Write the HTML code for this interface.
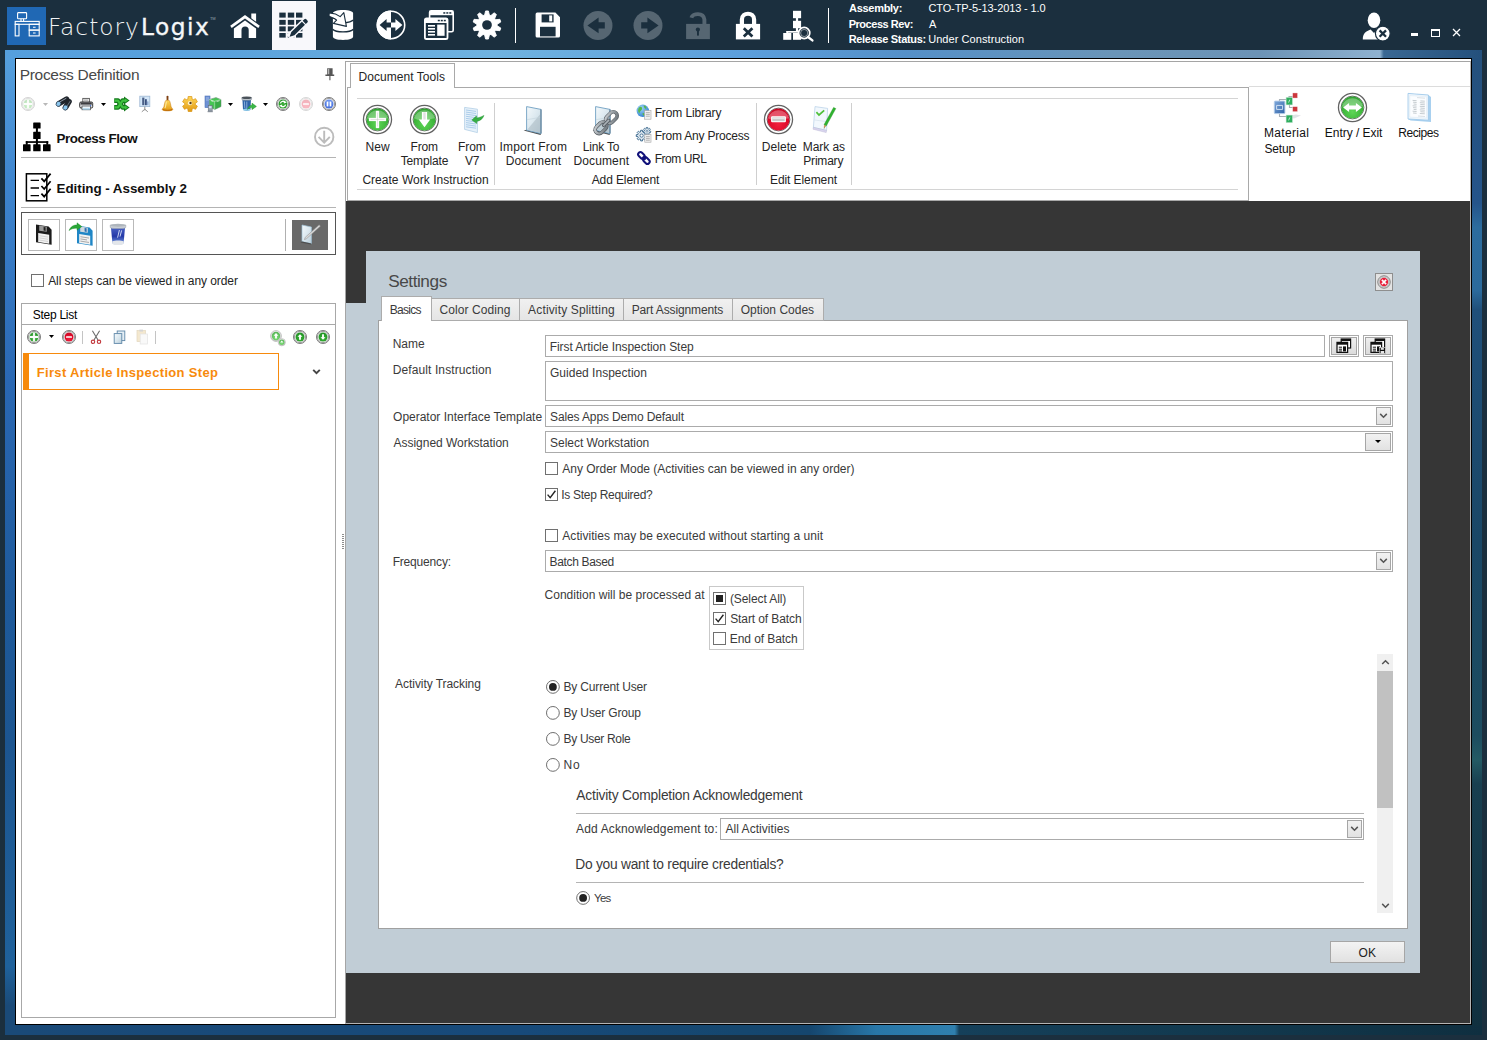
<!DOCTYPE html>
<html><head><meta charset="utf-8"><title>FactoryLogix</title>
<style>
html,body{margin:0;padding:0;}
body{width:1487px;height:1040px;overflow:hidden;background:#1b2f3e;font-family:"Liberation Sans",sans-serif;font-size:12px;color:#222;position:relative;}
#root{position:absolute;left:0;top:0;width:1487px;height:1040px;overflow:hidden;}
#root div,#root svg,#root span.t{position:absolute;box-sizing:border-box;}
span.t{white-space:pre;}
svg{overflow:visible;}
</style></head><body><div id="root">
<svg width="0" height="0" style="left:0;top:0"><defs>
<radialGradient id="gGreen" cx="50%" cy="70%" r="75%"><stop offset="0" stop-color="#5fd657"/><stop offset="0.6" stop-color="#3db53a"/><stop offset="1" stop-color="#2d9a2f"/></radialGradient>
<radialGradient id="gGreenS" cx="50%" cy="65%" r="70%"><stop offset="0" stop-color="#38b236"/><stop offset="1" stop-color="#1f8e22"/></radialGradient>
<radialGradient id="gRed" cx="50%" cy="70%" r="75%"><stop offset="0" stop-color="#f0203c"/><stop offset="0.6" stop-color="#de0a2a"/><stop offset="1" stop-color="#c00822"/></radialGradient>
<radialGradient id="gBlue" cx="50%" cy="30%" r="75%"><stop offset="0" stop-color="#7aa2f5"/><stop offset="1" stop-color="#3c66d8"/></radialGradient>
<linearGradient id="gRing" x1="0" y1="0" x2="0" y2="1"><stop offset="0" stop-color="#6e6e6e"/><stop offset="0.5" stop-color="#9a9a9a"/><stop offset="1" stop-color="#d8d8d8"/></linearGradient>
<linearGradient id="gRing2" x1="0" y1="0" x2="0" y2="1"><stop offset="0" stop-color="#f4f4f4"/><stop offset="1" stop-color="#bdbdbd"/></linearGradient>
<linearGradient id="gDoc" x1="0" y1="0" x2="1" y2="1"><stop offset="0" stop-color="#f4f9fc"/><stop offset="0.5" stop-color="#dbe8ef"/><stop offset="1" stop-color="#b9cdd8"/></linearGradient>
<linearGradient id="gBtn" x1="0" y1="0" x2="0" y2="1"><stop offset="0" stop-color="#f1f1f1"/><stop offset="1" stop-color="#dedede"/></linearGradient>
<linearGradient id="gChain" x1="0" y1="0" x2="1" y2="1"><stop offset="0" stop-color="#c9ced2"/><stop offset="1" stop-color="#6d757b"/></linearGradient>
<linearGradient id="gGold" x1="0" y1="0" x2="0" y2="1"><stop offset="0" stop-color="#ffd75a"/><stop offset="1" stop-color="#e29a12"/></linearGradient>
</defs></svg>

<div style="left:0px;top:0px;width:1487px;height:1040px;background:#1b2f3e;"></div>
<div style="left:5px;top:50px;width:1477px;height:985px;background:#1d5a94;"></div>
<div style="left:5px;top:50px;width:1477px;height:9px;background:linear-gradient(90deg,#559fdd 0%,#5aa2dc 15%,#70b3e0 33%,#5c9fdc 50%,#5590c8 61%,#6a95b8 75%,#6c93b6 85%,#8fb2d0 93.1%,#3a6893 93.35%,#24507c 100%);"></div>
<div style="left:5px;top:58px;width:11px;height:977px;background:linear-gradient(180deg,#559fdd 0%,#3f86cf 12%,#2a68b3 33%,#1e5a9c 55%,#1c5590 70%,#1f619b 93%,#1a4a78 97%,#1a4a78 100%);"></div>
<div style="left:5px;top:1025px;width:1477px;height:10px;background:linear-gradient(90deg,#1a4a78 0%,#174a7a 35%,#15476f 50%,#15466e 54.5%,#2877a8 59%,#2f7fae 64.3%,#15405a 64.6%,#123a50 80%,#0f2f40 100%);"></div>
<div style="left:1472px;top:58px;width:10px;height:968px;background:linear-gradient(180deg,#24507c 0%,#25548a 15%,#2c6c9e 17.5%,#2b6a9c 24%,#1f4f7a 26%,#1a4766 50%,#1c4c5f 70%,#235a64 72.5%,#183f50 75%,#10303f 100%);"></div>
<div style="left:15px;top:58px;width:1457px;height:967px;background:#fff;border:1px solid #000;"></div>
<div style="left:7px;top:7px;width:39px;height:38px;background:#2068b4;"></div>
<svg style="left:7px;top:7px;" width="39" height="38" viewBox="0 0 39 38"><g fill="none" stroke="#fff" stroke-width="1.1"><rect x="10.6" y="5.6" width="9" height="6.2" rx="0.8"/><path d="M14 11.8v2.6M16.6 11.8v2.6"/><rect x="8.2" y="14.4" width="24" height="2.9"/><rect x="8.2" y="17.3" width="3.8" height="11.6"/><rect x="22.2" y="17.3" width="10" height="5.8"/><rect x="22.2" y="23.1" width="10" height="5.8"/><path d="M26 20.2h2.6M26 26h2.6"/></g></svg>
<span class="t" style="left:47.90px;top:12px;font-size:23.3px;line-height:29px;letter-spacing:0.969px;font-family:'DejaVu Sans Light','DejaVu Sans',sans-serif;color:#f2f4f5;">Factory</span>
<span class="t" style="left:140.99px;top:12px;font-size:23.3px;line-height:29px;letter-spacing:1.463px;font-family:'DejaVu Sans',sans-serif;color:#f6f8f9;-webkit-text-stroke:0.35px #f6f8f9;">Logix</span>
<span class="t" style="left:209.92px;top:15px;font-size:4px;line-height:7px;letter-spacing:0.000px;color:#9aa7b0;">TM</span>
<svg style="left:228px;top:10px;" width="34" height="30" viewBox="0 0 34 30"><g fill="#ffffff"><path d="M17 5.1 L31.8 15.8 L30.3 18.1 L17 8.6 L3.7 18.1 L2.2 15.8 Z"/><path d="M23.3 3.6h4.8v8.2l-4.8-3.5z"/><path d="M17 10.6 L28.1 18.6 V28.1 H20.7 V20 a3.6 3.6 0 0 0 -7.2 0 V28.1 H5.9 V18.6 Z"/></g></svg>
<div style="left:272px;top:1px;width:44px;height:49px;background:#f8f8fb;"></div>
<svg style="left:272px;top:0px;" width="44" height="50" viewBox="0 0 44 50"><g fill="#1b2f3e"><rect x="7.3" y="12.6" width="6.4" height="5"/><rect x="7.3" y="19.9" width="6.4" height="4.9"/><rect x="7.3" y="26.4" width="6.4" height="4.9"/><rect x="7.3" y="33.0" width="6.4" height="4.6"/><rect x="15.8" y="12.6" width="6.4" height="5"/><rect x="15.8" y="19.9" width="6.4" height="4.9"/><rect x="15.8" y="26.4" width="6.4" height="4.9"/><rect x="15.8" y="33.0" width="6.4" height="4.6"/><rect x="24.0" y="12.6" width="6.4" height="5"/><rect x="24.0" y="19.9" width="6.4" height="4.9"/><rect x="24.0" y="26.4" width="6.4" height="4.9"/><rect x="24.0" y="33.0" width="6.4" height="4.6"/></g><g transform="translate(17.6 36.8) rotate(-44.5)"><path d="M-1 -3.6 L25.5 -3.6 L25.5 3.6 L-1 3.6Z" fill="#f8f8fb"/><path d="M0 0 L4.6 -2.2 L19.4 -2.2 L19.4 2.2 L4.6 2.2 Z M20.5 -2.2 h2.3 a1.4 1.4 0 0 1 1.4 1.4 v1.6 a1.4 1.4 0 0 1 -1.4 1.4 h-2.3z" fill="#1b2f3e"/></g></svg>
<svg style="left:328px;top:9px;" width="27" height="32" viewBox="0 0 27 32"><path d="M4.9 4.4 C4.9 2.4 9 1.1 15 1.1 C21 1.1 25.1 2.4 25.1 4.4 V27.6 C25.1 29.8 21 31 15 31 C9 31 4.9 29.8 4.9 27.6 Z" fill="#ffffff"/><g fill="none" stroke="#1b2f3e" stroke-width="1.4"><path d="M4.6 20.2 C8 23.8 22 23.8 25.4 20.2"/><path d="M25.4 11.2 C23 12.8 20.5 13.5 17.6 13.7"/></g><path d="M1.1 4.2 C4 3.8 8 4.5 12.2 7.6 L15.8 3.7 L18.4 17.4 L5.4 14.4 L8.6 11.2 C7.4 10 6.3 9.4 5 9 L1.1 7.2 Z" fill="#ffffff" stroke="#1b2f3e" stroke-width="1.1" stroke-linejoin="round"/><path d="M5 9 C6.6 9.6 7.6 10.2 8.6 11.2" fill="none" stroke="#1b2f3e" stroke-width="1"/></svg>
<svg style="left:376px;top:10px;" width="30" height="30" viewBox="0 0 30 30"><circle cx="15" cy="15" r="13.7" fill="none" stroke="#ffffff" stroke-width="1.6"/><path d="M15 0.6 A14.4 14.4 0 0 0 15 29.4 Z" fill="#ffffff"/><path d="M3.6 15 L10.6 9 V12.6 H15 V17.4 H10.6 V21 Z" fill="#1b2f3e"/><path d="M26.4 15 L19.4 9 V12.6 H15 V17.4 H19.4 V21 Z" fill="#ffffff"/></svg>
<svg style="left:424px;top:10px;" width="31" height="31" viewBox="0 0 31 31"><rect x="5.6" y="0.8" width="23.6" height="21" rx="1.6" fill="#1b2f3e" stroke="#ffffff" stroke-width="1.6"/><rect x="5.6" y="0.8" width="23.6" height="4.4" fill="#ffffff"/><g fill="#1b2f3e"><rect x="19.3" y="2.2" width="2" height="1.5"/><rect x="22.3" y="2.2" width="2" height="1.5"/><rect x="25.3" y="2.2" width="2" height="1.5"/></g><rect x="0.9" y="8.4" width="22.6" height="20.6" rx="1.6" fill="#1b2f3e" stroke="#ffffff" stroke-width="1.8"/><rect x="0.9" y="8.4" width="22.6" height="4.6" fill="#ffffff"/><g fill="#1b2f3e"><rect x="13.8" y="9.8" width="2" height="1.5"/><rect x="16.8" y="9.8" width="2" height="1.5"/><rect x="19.8" y="9.8" width="2" height="1.5"/></g><g fill="#ffffff"><rect x="4" y="15" width="7" height="1.6"/><rect x="4" y="18" width="7" height="1.6"/><rect x="4" y="21" width="7" height="1.6"/><rect x="4" y="24" width="7" height="1.6"/><rect x="13.2" y="14.6" width="7.4" height="11.2"/></g></svg>
<svg style="left:472px;top:10px;" width="30" height="30" viewBox="0 0 30 30"><path d="M12.63 5.08 L13.59 0.97 L16.41 0.97 L17.37 5.08 L18.91 5.58 L22.11 2.82 L24.39 4.48 L22.75 8.37 L23.70 9.68 L27.91 9.33 L28.78 12.00 L25.17 14.19 L25.17 15.81 L28.78 18.00 L27.91 20.67 L23.70 20.32 L22.75 21.63 L24.39 25.52 L22.11 27.18 L18.91 24.42 L17.37 24.92 L16.41 29.03 L13.59 29.03 L12.63 24.92 L11.09 24.42 L7.89 27.18 L5.61 25.52 L7.25 21.63 L6.30 20.32 L2.09 20.67 L1.22 18.00 L4.83 15.81 L4.83 14.19 L1.22 12.00 L2.09 9.33 L6.30 9.68 L7.25 8.37 L5.61 4.48 L7.89 2.82 L11.09 5.58Z" fill="#ffffff" stroke="#ffffff" stroke-width="0.9" stroke-linejoin="round"/><circle cx="15" cy="15" r="4.85" fill="#1b2f3e"/></svg>
<div style="left:515px;top:8px;width:1px;height:35px;background:#ffffff;"></div>
<svg style="left:535px;top:12px;" width="26" height="26" viewBox="0 0 26 26"><path d="M0.6 2.2 a1.6 1.6 0 0 1 1.6 -1.6 H20.4 L25 5.2 V24 a1.6 1.6 0 0 1 -1.6 1.6 H2.2 a1.6 1.6 0 0 1 -1.6 -1.6 Z" fill="#ffffff"/><rect x="6.6" y="2.4" width="12" height="8" fill="#1b2f3e"/><rect x="14.2" y="3.4" width="3" height="6" fill="#ffffff"/><rect x="5" y="14.8" width="15.6" height="9.6" fill="#1b2f3e"/></svg>
<svg style="left:583px;top:10px;" width="30" height="31" viewBox="0 0 30 31"><circle cx="15" cy="15.4" r="14.5" fill="#566672"/><path d="M4.4 15.4 L15.6 7.6 V12.2 H21.8 V18.6 H15.6 V23.2 Z" fill="#1b2f3e"/></svg>
<svg style="left:633px;top:10px;" width="30" height="31" viewBox="0 0 30 31"><circle cx="15" cy="15.4" r="14.5" fill="#566672"/><path d="M25.6 15.4 L14.4 7.6 V12.2 H8.2 V18.6 H14.4 V23.2 Z" fill="#1b2f3e"/></svg>
<svg style="left:685px;top:10px;" width="26" height="30" viewBox="0 0 26 30"><rect x="1.1" y="13.9" width="23.8" height="15.2" fill="#566672"/><path d="M6.4 7.8 C7.6 3.2 18.4 2 19.4 9.4 V14" fill="none" stroke="#566672" stroke-width="3.9"/><circle cx="12.9" cy="19.6" r="2.1" fill="#1b2f3e"/><rect x="12" y="20" width="1.9" height="5.6" fill="#1b2f3e"/></svg>
<svg style="left:735px;top:10px;" width="26" height="30" viewBox="0 0 26 30"><rect x="0.9" y="13.9" width="24.2" height="15.5" fill="#ffffff"/><path d="M6.9 14 V9.6 C6.9 1.8 19.1 1.8 19.1 9.6 V14" fill="none" stroke="#ffffff" stroke-width="4.2"/><path d="M8.8 18.2 L17.4 26.4 M17.4 18.2 L8.8 26.4" stroke="#1b2f3e" stroke-width="2.8"/></svg>
<svg style="left:783px;top:10px;" width="31" height="31" viewBox="0 0 31 31"><g fill="#ffffff"><rect x="10" y="0.8" width="8.1" height="7.4"/><rect x="12.9" y="8" width="2.2" height="3"/><rect x="10" y="10.8" width="8.1" height="7.4"/><rect x="12.9" y="18" width="2.2" height="4"/><rect x="3.4" y="21" width="12" height="1.7"/><rect x="3.4" y="21" width="1.8" height="3"/><rect x="0.2" y="23" width="8.1" height="6.8"/><rect x="10" y="23" width="8.1" height="6.8"/></g><circle cx="21.2" cy="23" r="5.6" fill="#1b2f3e" stroke="#ffffff" stroke-width="1.7"/><circle cx="21.2" cy="23" r="3.6" fill="none" stroke="#ffffff" stroke-width="0.7" opacity=".7"/><path d="M25 27 L29.4 30.4" stroke="#ffffff" stroke-width="2.4" stroke-linecap="round"/></svg>
<div style="left:828px;top:8px;width:1px;height:35px;background:#ffffff;"></div>
<span class="t" style="left:849.12px;top:1px;font-size:11px;line-height:14px;letter-spacing:-0.305px;font-weight:bold;color:#ffffff;">Assembly:</span>
<span class="t" style="left:848.68px;top:17px;font-size:11px;line-height:14px;letter-spacing:-0.462px;font-weight:bold;color:#ffffff;">Process Rev:</span>
<span class="t" style="left:848.68px;top:32px;font-size:11px;line-height:14px;letter-spacing:-0.314px;font-weight:bold;color:#ffffff;">Release Status:</span>
<span class="t" style="left:928.45px;top:1px;font-size:11px;line-height:14px;letter-spacing:-0.114px;color:#ffffff;">CTO-TP-5-13-2013 - 1.0</span>
<span class="t" style="left:929.00px;top:17px;font-size:11px;line-height:14px;letter-spacing:0.000px;color:#ffffff;">A</span>
<span class="t" style="left:928.17px;top:32px;font-size:11px;line-height:14px;letter-spacing:0.072px;color:#ffffff;">Under Construction</span>
<svg style="left:1362px;top:12px;" width="29" height="29" viewBox="0 0 29 29"><ellipse cx="12" cy="8.2" rx="6.3" ry="7.8" fill="#ffffff"/><path d="M0.8 27.6 C0.8 21 4 19.4 8.6 17.6 L12 21 L15.4 17.6 C20 19.4 23.2 21 23.2 27.6 Z" fill="#ffffff"/><circle cx="20.8" cy="21.6" r="7.4" fill="#ffffff" stroke="#1b2f3e" stroke-width="1.2"/><path d="M17.6 18.4 L24 24.8 M24 18.4 L17.6 24.8" stroke="#1b2f3e" stroke-width="2.3"/></svg>
<div style="left:1411px;top:33px;width:7px;height:3px;background:#ffffff;"></div>
<div style="left:1431px;top:29px;width:9px;height:8px;border:1px solid #ffffff;border-top:2px solid #ffffff;"></div>
<svg style="left:1452px;top:28px;" width="9" height="9" viewBox="0 0 9 9"><path d="M1 1 L8 8 M8 1 L1 8" stroke="#ffffff" stroke-width="1.3"/></svg>
<span class="t" style="left:19.66px;top:65px;font-size:15.5px;line-height:19px;letter-spacing:-0.298px;color:#484848;">Process Definition</span>
<svg style="left:324px;top:67px;" width="12" height="14" viewBox="0 0 12 14"><path d="M3.2 1.2 H8.6 V7.4 H10.2 V8.9 H1.4 V7.4 H3.2 Z" fill="#565656"/><path d="M5.9 8.9 V13.2" stroke="#565656" stroke-width="1.1"/><path d="M4.6 1.8 V7.2" stroke="#b4b4b4" stroke-width="1.3"/></svg>
<svg style="left:20px;top:96px;" width="16" height="16" viewBox="-8 -8 16 16"><g opacity="0.32"><circle cx="0" cy="0" r="6.55" fill="#fff" stroke="#626262" stroke-width="0.8"/><circle cx="0" cy="0" r="5.60" fill="none" stroke="#6c6c6c" stroke-width="0.65"/><circle cx="0" cy="0" r="4.48" fill="url(#gGreen)"/><path d="M-0.91 -4.2H0.91V-0.91H4.2V0.91H0.91V4.2H-0.91V0.91H-4.2V-0.91H-0.91Z" fill="#fff" stroke="#e8e8e8" stroke-width=".3"/></g></svg>
<svg style="left:42.5px;top:103.0px;" width="5" height="3" viewBox="0 0 5 3"><path d="M0 0H5L2.5 3Z" fill="#b8b8b8"/></svg>
<svg style="left:54px;top:96px;" width="18" height="16" viewBox="0 0 18 16"><g stroke-linecap="round" fill="none"><path d="M12.6 3.2 L5 7.6" stroke="#20252b" stroke-width="5.6"/><path d="M15 5.6 L11.6 11.2" stroke="#20252b" stroke-width="5.6"/><path d="M12 2.4 L6 5.8" stroke="#8d99a5" stroke-width="1"/><path d="M16 5.4 L13.4 9.6" stroke="#6d7985" stroke-width=".9"/></g><ellipse cx="4.5" cy="7.9" rx="2.3" ry="2.6" transform="rotate(30 4.5 7.9)" fill="#8cc6ee" stroke="#2b3e50" stroke-width=".7"/><ellipse cx="11.4" cy="11.6" rx="2.3" ry="2.6" transform="rotate(30 11.4 11.6)" fill="#8cc6ee" stroke="#2b3e50" stroke-width=".7"/></svg>
<svg style="left:79px;top:97px;" width="15" height="14" viewBox="0 0 15 14"><rect x="3.8" y="1.4" width="6.6" height="4.6" fill="#f4f4f4" stroke="#555" stroke-width=".9"/><rect x="5" y="2.6" width="4.2" height="1" fill="#9a9a9a"/><rect x="0.7" y="5" width="13" height="6" rx="1.3" fill="#dcdde0" stroke="#333" stroke-width="1"/><rect x="1.6" y="5.4" width="11.2" height="2.2" fill="#3d3d40"/><rect x="3" y="9" width="8.4" height="3.8" fill="#eef6fb" stroke="#444" stroke-width=".7"/><rect x="3.6" y="11.4" width="7.2" height="1.2" fill="#9fd0ea"/><circle cx="11.6" cy="8.6" r=".6" fill="#2d6be0"/></svg>
<svg style="left:100.5px;top:103.0px;" width="5" height="3" viewBox="0 0 5 3"><path d="M0 0H5L2.5 3Z" fill="#000"/></svg>
<svg style="left:113px;top:96px;" width="17" height="16" viewBox="0 0 17 16"><g fill="none" stroke="#157a1c" stroke-width="4.6" stroke-linejoin="round"><path d="M1.2 4.6 H5 L9.6 11.4 H12"/><path d="M1.2 11.4 H5 L9.6 4.6 H12"/></g><g fill="#157a1c"><path d="M11 0.6 L16.6 4.6 L11 8.6Z"/><path d="M11 7.4 L16.6 11.4 L11 15.4Z"/></g><g fill="none" stroke="#3fc23f" stroke-width="2.2" stroke-linejoin="round"><path d="M1.6 4.6 H5 L9.6 11.4 H12"/><path d="M1.6 11.4 H5 L9.6 4.6 H12"/></g><g fill="#3fc23f"><path d="M12 2.6 L15 4.6 L12 6.6Z"/><path d="M12 9.4 L15 11.4 L12 13.4Z"/></g></svg>
<svg style="left:138px;top:95px;" width="14" height="18" viewBox="0 0 14 18"><rect x="1.8" y="1.2" width="10" height="10.4" fill="#d3e6f8" stroke="#9db7d2" stroke-width=".8"/><rect x="4.2" y="2.6" width="2.2" height="7.6" fill="#4a5f86"/><rect x="7" y="4.2" width="1.8" height="6" fill="#39507e"/><rect x="9.2" y="6.4" width="1.2" height="3.8" fill="#7f9fca"/><path d="M6.8 11.6 V15.4 M6.8 14.2 L3.8 16.8 M6.8 14.2 L9.8 16.8" stroke="#8f8f8f" stroke-width="1" fill="none"/></svg>
<svg style="left:161px;top:95px;" width="13" height="17" viewBox="0 0 13 17"><path d="M5.5 1.3 C5.5 0.5 7.5 0.5 7.5 1.3 L7.3 5.6 H5.7Z" fill="#7e3f12"/><path d="M5 5.2 H8 C9.4 6.6 9.6 10 10.2 12 C10.6 13 11.6 13.4 11.8 14.4 C11.8 16.4 1.2 16.4 1.2 14.4 C1.4 13.4 2.4 13 2.8 12 C3.4 10 3.6 6.6 5 5.2Z" fill="url(#gGold)" stroke="#c4770f" stroke-width=".5"/><path d="M1.8 14.4 C4 15.6 9 15.6 11.2 14.4" stroke="#b5620c" stroke-width=".9" fill="none"/><path d="M5.4 6.6 C4.8 9 4.8 11.4 4 13" stroke="#fff3b8" stroke-width="1.1" fill="none" opacity=".8"/></svg>
<svg style="left:182px;top:96px;" width="16" height="16" viewBox="0 0 16 16"><path d="M5.90 3.03 L6.17 0.52 L9.83 0.52 L10.10 3.03 L11.26 3.69 L13.56 2.68 L15.39 5.85 L13.36 7.33 L13.36 8.67 L15.39 10.15 L13.56 13.32 L11.26 12.31 L10.10 12.97 L9.83 15.48 L6.17 15.48 L5.90 12.97 L4.74 12.31 L2.44 13.32 L0.61 10.15 L2.64 8.67 L2.64 7.33 L0.61 5.85 L2.44 2.68 L4.74 3.69Z" fill="url(#gGold)" stroke="#d9920f" stroke-width=".7" stroke-linejoin="round"/><circle cx="8" cy="7.2" r="2.1" fill="#fff4cf"/><circle cx="8.5" cy="7" r="1.2" fill="#5a3c12"/></svg>
<svg style="left:204px;top:95px;" width="18" height="18" viewBox="0 0 18 18"><rect x="1" y="1" width="5" height="11.6" fill="#5f86cf" stroke="#3f66b3" stroke-width=".6" opacity=".9"/><path d="M2 3 H5 M2 5 H5" stroke="#c5d6f2" stroke-width=".6"/><path d="M5.4 4.4 L12 2.6 L17 4.6 V11.6 L10.8 14.4 L5.4 12Z" fill="#46c653" stroke="#7d978a" stroke-width=".6"/><path d="M5.4 4.4 L10.8 6.4 L17 4.6 M10.8 6.4 V14.4" stroke="#d4f3d4" stroke-width=".7" fill="none"/><path d="M10.8 6.4 L17 4.6 V11.6 L10.8 14.4Z" fill="#2a8f3a" opacity=".5"/><path d="M7 5.6 L9.4 6.6 M12.6 6.6 L15.6 5.7" stroke="#fff" stroke-width=".8" opacity=".8"/><rect x="4.2" y="10.4" width="4" height="5.6" fill="#9aa5b1" stroke="#5f6975" stroke-width=".5"/><rect x="4.9" y="11.2" width="2.6" height="2" fill="#cfe0f4"/><path d="M3.6 16.7 H8.8" stroke="#6a7480" stroke-width=".9"/></svg>
<svg style="left:227.5px;top:103.0px;" width="5" height="3" viewBox="0 0 5 3"><path d="M0 0H5L2.5 3Z" fill="#000"/></svg>
<svg style="left:240px;top:96px;" width="17" height="16" viewBox="0 0 17 16"><path d="M2.4 3 H11 L10.4 13.6 C10.4 15 3 15 3 13.6 Z" fill="#2f64a8"/><path d="M3 13 C5 12.2 8.4 12.2 10.4 13 L10.4 13.8 C10.4 15.2 3 15.2 3 13.8Z" fill="#8fd0ee"/><path d="M1.8 1.6 H11.6 V3.4 C11.6 4.6 1.8 4.6 1.8 3.4Z" fill="#c3cad1" stroke="#7d8790" stroke-width=".5"/><ellipse cx="6.7" cy="1.8" rx="4.9" ry="1.2" fill="#4a525a"/><path d="M4.4 5.4 L4.8 12 M6.8 5.6 V12.4" stroke="#8fb4e0" stroke-width=".9"/><path d="M7.4 13.4 C8.4 10.6 10 9.4 12 9.2 V7.2 L16.4 10.4 L12 13.6 V11.6 C10.2 11.6 8.8 12.2 7.4 13.4Z" fill="#3ab847" stroke="#1f8a2b" stroke-width=".5"/></svg>
<svg style="left:262.5px;top:103.0px;" width="5" height="3" viewBox="0 0 5 3"><path d="M0 0H5L2.5 3Z" fill="#000"/></svg>
<svg style="left:275px;top:96px;" width="16" height="16" viewBox="-8 -8 16 16"><g opacity="1.0"><circle cx="0" cy="0" r="6.55" fill="#fff" stroke="#626262" stroke-width="0.8"/><circle cx="0" cy="0" r="5.60" fill="none" stroke="#6c6c6c" stroke-width="0.65"/><circle cx="0" cy="0" r="4.48" fill="url(#gGreenS)"/><g fill="none" stroke="#fff" stroke-width="1.3"><path d="M-2.6 -0.6 A2.7 2.7 0 0 1 2 -1.9"/><path d="M2.6 0.6 A2.7 2.7 0 0 1 -2 1.9"/></g><path d="M1 -3.6 L3.8 -1.6 L0.8 -0.4Z" fill="#fff"/><path d="M-1 3.6 L-3.8 1.6 L-0.8 0.4Z" fill="#fff"/></g></svg>
<svg style="left:298px;top:96px;" width="16" height="16" viewBox="-8 -8 16 16"><g opacity="0.3"><circle cx="0" cy="0" r="6.55" fill="#fff" stroke="#626262" stroke-width="0.8"/><circle cx="0" cy="0" r="5.60" fill="none" stroke="#6c6c6c" stroke-width="0.65"/><circle cx="0" cy="0" r="4.48" fill="url(#gRed)"/><rect x="-3.01" y="-0.81" width="6.02" height="1.61" rx=".6" fill="#fff"/></g></svg>
<svg style="left:321px;top:96px;" width="16" height="16" viewBox="-8 -8 16 16"><g opacity="1.0"><circle cx="0" cy="0" r="6.55" fill="#fff" stroke="#626262" stroke-width="0.8"/><circle cx="0" cy="0" r="5.60" fill="none" stroke="#6c6c6c" stroke-width="0.65"/><circle cx="0" cy="0" r="4.48" fill="url(#gBlue)"/><rect x="-2.3" y="-2.4" width="1.6" height="4.8" fill="#fff"/><rect x="0.7" y="-2.4" width="1.6" height="4.8" fill="#fff"/></g></svg>
<svg style="left:23px;top:122px;" width="28" height="30" viewBox="0 0 28 30"><g fill="#000"><rect x="10.2" y="0.4" width="7.4" height="6.2" rx=".6"/><rect x="10.2" y="9.8" width="7.4" height="7.2" rx=".6"/><rect x="0.0" y="22.3" width="7.6" height="7" rx=".6"/><rect x="10.2" y="22.3" width="7.4" height="7" rx=".6"/><rect x="20.0" y="22.3" width="7.6" height="7" rx=".6"/><rect x="12.9" y="6" width="2" height="4.4"/><rect x="12.9" y="16.6" width="2" height="6.4"/><rect x="2.8" y="19.2" width="22.4" height="1.7"/><rect x="2.8" y="19.2" width="1.9" height="3.6"/><rect x="23.3" y="19.2" width="1.9" height="3.6"/></g></svg>
<span class="t" style="left:56.53px;top:130px;font-size:13.4px;line-height:17px;letter-spacing:-0.478px;font-weight:bold;color:#111;">Process Flow</span>
<svg style="left:313px;top:126px;" width="22" height="22" viewBox="0 0 22 22"><circle cx="11.2" cy="10.9" r="9.2" fill="none" stroke="#bcbcbc" stroke-width="1.9"/><path d="M11.2 4.8 V16.4 M5.6 10.8 L11.2 16.6 L16.8 10.8" fill="none" stroke="#bcbcbc" stroke-width="1.9"/></svg>
<div style="left:21px;top:157px;width:315px;height:1px;background:#b4b4b4;"></div>
<svg style="left:25px;top:171px;" width="28" height="31" viewBox="0 0 28 31"><rect x="1.4" y="2.8" width="20.4" height="27" fill="#fff" stroke="#000" stroke-width="1.5"/><g stroke="#000" stroke-width="1.4" fill="none"><path d="M5.6 9.4 H14 M5.6 17 H14 M5.6 24.6 H14"/><path d="M16.4 7.4 L19.2 10.4 L25.6 2.6 M16.4 15 L19.2 18 L25.6 10.2 M16.4 22.6 L19.2 25.6 L25.6 17.8" stroke-width="1.7"/></g></svg>
<span class="t" style="left:56.53px;top:180px;font-size:13.4px;line-height:17px;letter-spacing:-0.043px;font-weight:bold;color:#111;">Editing - Assembly 2</span>
<div style="left:21px;top:207px;width:315px;height:1px;background:#b4b4b4;"></div>
<div style="left:21px;top:212px;width:315px;height:43px;border:1px solid #555;background:#fff;"></div>
<div style="left:28px;top:219px;width:32px;height:32px;border:1px solid #b9b9b9;background:#fff;"></div>
<div style="left:65px;top:219px;width:32px;height:32px;border:1px solid #b9b9b9;background:#fff;"></div>
<div style="left:102px;top:219px;width:32px;height:32px;border:1px solid #b9b9b9;background:#fff;"></div>
<svg style="left:35px;top:223px;" width="18" height="24" viewBox="0 0 18 24"><g transform="skewY(9)"><path d="M1 1.4 H13.6 L16.6 4.2 V19 H1Z" fill="#1b1b1b"/><rect x="4.2" y="1.8" width="7.6" height="5.2" fill="#9a9a9a"/><rect x="8.6" y="2.6" width="2" height="3.6" fill="#222"/><rect x="3.2" y="9.6" width="11" height="9" fill="#f2f2f2"/><path d="M4.4 12 H13 M4.4 14.2 H13 M4.4 16.4 H13" stroke="#c6c6c6" stroke-width=".7"/></g></svg>
<svg style="left:68px;top:222px;" width="27" height="26" viewBox="0 0 27 26"><g transform="translate(8 2) skewY(9)"><path d="M1 1.4 H13.6 L16.6 4.2 V19 H1Z" fill="#1f86c6"/><rect x="4.2" y="1.8" width="7.6" height="5.2" fill="#cfd8de"/><rect x="8.6" y="2.6" width="2" height="3.6" fill="#2c6fb2"/><rect x="3.2" y="9.6" width="11" height="9" fill="#f2f2f2"/><path d="M4.4 12 H13 M4.4 14.2 H11 M4.4 16.4 H13" stroke="#9a9a9a" stroke-width=".8"/></g><path d="M1 8.6 C2.6 4.4 6 2.8 9 3 V0.8 L13.8 4.6 L9 8.2 V6.2 C6 6 3.4 6.6 1 8.6Z" fill="#2aa737" stroke="#1d8a2a" stroke-width=".4"/></svg>
<svg style="left:109px;top:223px;" width="18" height="24" viewBox="0 0 18 24"><defs><linearGradient id="gBin" x1="0" y1="0" x2="0" y2="1"><stop offset="0" stop-color="#4f68c8"/><stop offset=".55" stop-color="#2438a8"/><stop offset="1" stop-color="#7fa8e6"/></linearGradient></defs><path d="M1.8 3 H16.2 L14.6 20 C14.6 22.2 3.4 22.2 3.4 20Z" fill="url(#gBin)"/><path d="M1.2 2 H16.8 V4.4 C16.8 6 1.2 6 1.2 4.4Z" fill="#c9ced4" stroke="#9aa2aa" stroke-width=".5"/><ellipse cx="9" cy="2.2" rx="7.6" ry="1.5" fill="#aeb5bc"/><path d="M10.4 7 L8.6 14.6 M12.6 7.4 L11 13.6" stroke="#dfe8fa" stroke-width="1" opacity=".9"/><path d="M3.2 18.4 C6 17.2 12 17.2 14.8 18.4 L14.6 20.4 C14.6 22.4 3.4 22.4 3.4 20.4Z" fill="#e3e6ea"/></svg>
<div style="left:285px;top:219px;width:1px;height:32px;background:#b0b0b0;"></div>
<div style="left:292px;top:220px;width:36px;height:30px;background:#696969;"></div>
<svg style="left:299px;top:222px;" width="24" height="26" viewBox="0 0 24 26"><path d="M3 3 L12.4 5 V21.6 L3 19.6Z" fill="url(#gDoc)" stroke="#9fc2d6" stroke-width=".7"/><path d="M3 19.6 L12.4 21.6 L11.8 22.6 L1.6 20.4Z" fill="#4d4d4d"/><path d="M5.4 17.6 L6.2 15.4 L20.2 2.8 L21.4 4.2 L7.4 16.8Z" fill="#d8d8d8" stroke="#8a8a8a" stroke-width=".5"/></svg>
<div style="left:31px;top:274px;width:13px;height:13px;border:1px solid #707070;background:#fff;"></div>
<span class="t" style="left:48.20px;top:273px;font-size:12px;line-height:16px;letter-spacing:-0.067px;color:#242424;">All steps can be viewed in any order</span>
<div style="left:21px;top:303px;width:315px;height:715px;border:1px solid #a8a8a8;background:#fff;"></div>
<div style="left:21px;top:324px;width:315px;height:1px;background:#a8a8a8;"></div>
<span class="t" style="left:32.76px;top:307px;font-size:12px;line-height:16px;letter-spacing:-0.268px;color:#000;">Step List</span>
<svg style="left:26px;top:329px;" width="16" height="16" viewBox="-8 -8 16 16"><g opacity="1.0"><circle cx="0" cy="0" r="6.55" fill="#fff" stroke="#626262" stroke-width="0.8"/><circle cx="0" cy="0" r="5.60" fill="none" stroke="#6c6c6c" stroke-width="0.65"/><circle cx="0" cy="0" r="4.48" fill="url(#gGreenS)"/><path d="M-0.91 -4.2H0.91V-0.91H4.2V0.91H0.91V4.2H-0.91V0.91H-4.2V-0.91H-0.91Z" fill="#fff" stroke="#e8e8e8" stroke-width=".3"/></g></svg>
<svg style="left:48.5px;top:335.0px;" width="5" height="3" viewBox="0 0 5 3"><path d="M0 0H5L2.5 3Z" fill="#000"/></svg>
<svg style="left:61px;top:329px;" width="16" height="16" viewBox="-8 -8 16 16"><g opacity="1.0"><circle cx="0" cy="0" r="6.55" fill="#fff" stroke="#626262" stroke-width="0.8"/><circle cx="0" cy="0" r="5.60" fill="none" stroke="#6c6c6c" stroke-width="0.65"/><circle cx="0" cy="0" r="4.48" fill="url(#gRed)"/><rect x="-3.01" y="-0.81" width="6.02" height="1.61" rx=".6" fill="#fff"/></g></svg>
<div style="left:82px;top:331px;width:1px;height:13px;background:#c4c4c4;"></div>
<svg style="left:90px;top:330px;" width="12" height="15" viewBox="0 0 12 15"><path d="M2.4 0.8 L8 10 M9.6 0.8 L4 10" stroke="#6b6b6b" stroke-width="1.1" fill="none"/><circle cx="3" cy="11.8" r="1.7" fill="none" stroke="#c2383c" stroke-width="1.1"/><circle cx="9" cy="11.8" r="1.7" fill="none" stroke="#c2383c" stroke-width="1.1"/></svg>
<svg style="left:113px;top:330px;" width="13" height="15" viewBox="0 0 13 15"><rect x="4.2" y="1" width="7.6" height="9.6" fill="#e4eef5" stroke="#5f87a8" stroke-width=".9"/><rect x="1.2" y="3.6" width="7.6" height="9.8" fill="url(#gDoc)" stroke="#5f87a8" stroke-width=".9"/></svg>
<svg style="left:136px;top:329px;" width="13" height="16" viewBox="0 0 13 16"><g opacity=".4"><rect x="1" y="1.6" width="8.4" height="11" fill="#e5c88a" stroke="#b89b5e" stroke-width=".7"/><rect x="3.4" y="0.6" width="3.6" height="2" fill="#999"/><rect x="4.2" y="5" width="7.4" height="10" fill="#f2f2f2" stroke="#bbb" stroke-width=".7"/></g></svg>
<div style="left:155px;top:331px;width:1px;height:13px;background:#c4c4c4;"></div>
<svg style="left:270px;top:330px;" width="16" height="17" viewBox="0 0 16 17"><g opacity=".8"><circle cx="6" cy="6" r="5.4" fill="url(#gRing2)" stroke="#9a9a9a" stroke-width=".7"/><circle cx="6" cy="6" r="4.2" fill="url(#gGreen)"/><path d="M6 3 L8.4 5.8 H6.9 V8.6 H5.1 V5.8 H3.6Z" fill="#fff"/><circle cx="11.8" cy="12.2" r="3.6" fill="url(#gRing2)" stroke="#9a9a9a" stroke-width=".6"/><circle cx="11.8" cy="12.2" r="2.7" fill="url(#gGreen)"/><path d="M11.8 10.4 L13.4 12.4 H10.2Z" fill="#fff"/></g></svg>
<svg style="left:292px;top:329px;" width="16" height="16" viewBox="-8 -8 16 16"><g opacity="1.0"><circle cx="0" cy="0" r="6.55" fill="#fff" stroke="#626262" stroke-width="0.8"/><circle cx="0" cy="0" r="5.60" fill="none" stroke="#6c6c6c" stroke-width="0.65"/><circle cx="0" cy="0" r="4.48" fill="url(#gGreenS)"/><path d="M0 -2.84 L2.51 -0.22 H0.93 V2.73 H-0.93 V-0.22 H-2.51 Z" fill="#fff"/></g></svg>
<svg style="left:315px;top:329px;" width="16" height="16" viewBox="-8 -8 16 16"><g opacity="1.0"><circle cx="0" cy="0" r="6.55" fill="#fff" stroke="#626262" stroke-width="0.8"/><circle cx="0" cy="0" r="5.60" fill="none" stroke="#6c6c6c" stroke-width="0.65"/><circle cx="0" cy="0" r="4.48" fill="url(#gGreenS)"/><path d="M0 2.84 L2.51 0.22 H0.93 V-2.73 H-0.93 V0.22 H-2.51 Z" fill="#fff"/></g></svg>
<div style="left:23px;top:353px;width:256px;height:37px;border:1px solid #f78a0c;border-left:6px solid #f78a0c;background:#fff;"></div>
<span class="t" style="left:36.76px;top:364px;font-size:13px;line-height:17px;letter-spacing:0.321px;font-weight:bold;color:#f78a0c;">First Article Inspection Step</span>
<svg style="left:311px;top:368px;" width="11" height="8" viewBox="0 0 11 8"><path d="M2.2 1.8 L5.5 5.2 L8.8 1.8" fill="none" stroke="#454545" stroke-width="1.9"/></svg>
<div style="left:345px;top:61px;width:1126px;height:963px;border:1px solid #a5a5a5;border-right:1px solid #b4b4b4;border-bottom:1px solid #b4b4b4;background:#fff;"></div>
<div style="left:346px;top:201px;width:1124px;height:822px;background:#363636;"></div>
<div style="left:1249px;top:86px;width:221px;height:1px;background:#dcdcdc;"></div>
<div style="left:347px;top:87px;width:902px;height:114px;border:1px solid #a9a9a9;background:#fff;"></div>
<div style="left:350px;top:63px;width:105px;height:25px;border:1px solid #a9a9a9;border-bottom:none;background:#fff;"></div>
<span class="t" style="left:358.54px;top:69px;font-size:12px;line-height:16px;letter-spacing:0.045px;color:#242424;">Document Tools</span>
<div style="left:357px;top:98px;width:881px;height:1px;background:#d4d4d4;"></div>
<div style="left:357px;top:189px;width:881px;height:1px;background:#d4d4d4;"></div>
<div style="left:494px;top:103px;width:1px;height:82px;background:#cfcfcf;"></div>
<div style="left:756px;top:103px;width:1px;height:82px;background:#cfcfcf;"></div>
<div style="left:851px;top:103px;width:1px;height:82px;background:#cfcfcf;"></div>
<svg style="left:362.0px;top:104.1px;" width="31.0" height="31.0" viewBox="-15.5 -15.5 31.0 31.0"><g opacity="1.0"><circle cx="0" cy="0" r="14.05" fill="#fff" stroke="#626262" stroke-width="1.3"/><circle cx="0" cy="0" r="11.38" fill="none" stroke="#6c6c6c" stroke-width="1.0"/><circle cx="0" cy="0" r="11.02" fill="url(#gGreen)"/><path d="M-10.58 -1.32 A11.02 11.02 0 0 1 10.58 -1.32 C4.41 -0.22 -4.41 2.20 -10.58 -1.32Z" fill="#fff" opacity=".3"/><path d="M-1.5225 -8.4825H1.5225V-1.5225H8.4825V1.5225H1.5225V8.4825H-1.5225V1.5225H-8.4825V-1.5225H-1.5225Z" fill="#fff" stroke="#e8e8e8" stroke-width=".3"/><path d="M-7 0H7M0 -7V7" stroke="#c9c9c9" stroke-width=".5"/></g></svg>
<svg style="left:408.9px;top:104.1px;" width="31.0" height="31.0" viewBox="-15.5 -15.5 31.0 31.0"><g opacity="1.0"><circle cx="0" cy="0" r="14.05" fill="#fff" stroke="#626262" stroke-width="1.3"/><circle cx="0" cy="0" r="11.38" fill="none" stroke="#6c6c6c" stroke-width="1.0"/><circle cx="0" cy="0" r="11.02" fill="url(#gGreen)"/><path d="M-10.58 -1.32 A11.02 11.02 0 0 1 10.58 -1.32 C4.41 -0.22 -4.41 2.20 -10.58 -1.32Z" fill="#fff" opacity=".3"/><path d="M-2.6 -7.6 H2.6 V0 H5.7 L0 7.7 L-5.7 0 H-2.6Z" fill="#fff"/><path d="M-1.2 -7.2 H1.2 V0 H-1.2Z" fill="#d4d4d4" opacity=".7"/></g></svg>
<span class="t" style="left:365.54px;top:139px;font-size:12px;line-height:16px;letter-spacing:0.050px;color:#242424;">New</span>
<span class="t" style="left:410.52px;top:139px;font-size:12px;line-height:16px;letter-spacing:-0.150px;color:#242424;">From</span>
<span class="t" style="left:400.71px;top:153px;font-size:12px;line-height:16px;letter-spacing:-0.150px;color:#242424;">Template</span>
<span class="t" style="left:458.12px;top:139px;font-size:12px;line-height:16px;letter-spacing:-0.150px;color:#242424;">From</span>
<span class="t" style="left:465.02px;top:153px;font-size:12px;line-height:16px;letter-spacing:-0.150px;color:#242424;">V7</span>
<span class="t" style="left:362.40px;top:172px;font-size:12px;line-height:16px;letter-spacing:0.023px;color:#242424;">Create Work Instruction</span>
<svg style="left:459px;top:105px;" width="28" height="30" viewBox="0 0 28 30"><path d="M5.6 2.4 L18.4 4.2 V27.6 L5.6 24.4Z" fill="#e6f1fa" stroke="#a9c9e2" stroke-width=".7"/><path d="M7 5.0 L17 6.4" stroke="#9cc3e4" stroke-width=".8"/><path d="M7 7.1 L17 8.5" stroke="#9cc3e4" stroke-width=".8"/><path d="M7 9.2 L17 10.6" stroke="#9cc3e4" stroke-width=".8"/><path d="M7 11.3 L17 12.7" stroke="#9cc3e4" stroke-width=".8"/><path d="M7 13.4 L17 14.8" stroke="#9cc3e4" stroke-width=".8"/><path d="M7 15.5 L17 16.9" stroke="#9cc3e4" stroke-width=".8"/><path d="M7 17.6 L17 19.0" stroke="#9cc3e4" stroke-width=".8"/><path d="M7 19.7 L17 21.1" stroke="#9cc3e4" stroke-width=".8"/><path d="M7 21.8 L17 23.2" stroke="#9cc3e4" stroke-width=".8"/><path d="M25 10.4 C22 12 19.6 12.8 17.6 13 V10.8 L12.8 15 L17.8 18.6 V16.4 C21 16 23.8 13.8 25 10.4Z" fill="#36b043" stroke="#1e8a2c" stroke-width=".4"/></svg>
<svg style="left:523px;top:105px;" width="20" height="31" viewBox="0 0 20 31"><path d="M0.6 25.6 L3.6 24.8 L18 28.4 L17.6 30 Z" fill="#2e2e2e" opacity=".85"/><path d="M3.6 1.6 L18 4.4 V28.6 L3.6 25.2Z" fill="url(#gDoc)" stroke="#6f9fc2" stroke-width=".9"/><path d="M4.4 24.6 L17.4 9 V27.8Z" fill="#aebcc5" opacity=".6"/><path d="M4.2 14.6 L17.4 12.4" stroke="#c3d3dc" stroke-width=".6"/><path d="M18 4.4 V28.6" stroke="#4e6f88" stroke-width=".9"/></svg>
<span class="t" style="left:499.42px;top:139px;font-size:12px;line-height:16px;letter-spacing:0.222px;color:#242424;">Import From</span>
<span class="t" style="left:505.74px;top:153px;font-size:12px;line-height:16px;letter-spacing:0.086px;color:#242424;">Document</span>
<svg style="left:592px;top:105px;" width="20" height="31" viewBox="0 0 20 31"><path d="M0.6 25.6 L3.6 24.8 L18 28.4 L17.6 30 Z" fill="#2e2e2e" opacity=".85"/><path d="M3.6 1.6 L18 4.4 V28.6 L3.6 25.2Z" fill="url(#gDoc)" stroke="#6f9fc2" stroke-width=".9"/><path d="M4.4 24.6 L17.4 9 V27.8Z" fill="#aebcc5" opacity=".6"/><path d="M4.2 14.6 L17.4 12.4" stroke="#c3d3dc" stroke-width=".6"/><path d="M18 4.4 V28.6" stroke="#4e6f88" stroke-width=".9"/></svg>
<svg style="left:592px;top:108px;" width="28" height="28" viewBox="0 0 28 28"><g fill="none"><rect x="-6.6" y="-3.9" width="13.2" height="7.8" rx="3.9" transform="translate(19.4 9.6) rotate(-45)" stroke="#5d646a" stroke-width="3.6"/><rect x="-6.6" y="-3.9" width="13.2" height="7.8" rx="3.9" transform="translate(19.4 9.6) rotate(-45)" stroke="url(#gChain)" stroke-width="2.4"/><rect x="-6.6" y="-3.9" width="13.2" height="7.8" rx="3.9" transform="translate(9 19.8) rotate(-45)" stroke="#4d545a" stroke-width="3.6"/><rect x="-6.6" y="-3.9" width="13.2" height="7.8" rx="3.9" transform="translate(9 19.8) rotate(-45)" stroke="url(#gChain)" stroke-width="2.4"/><path d="M11.6 17.4 L16.8 12.2" stroke="#596066" stroke-width="3.4" stroke-linecap="round"/><path d="M11.8 17.2 L16.6 12.4" stroke="#aab1b7" stroke-width="1.6" stroke-linecap="round"/></g></svg>
<span class="t" style="left:582.64px;top:139px;font-size:12px;line-height:16px;letter-spacing:-0.160px;color:#242424;">Link To</span>
<span class="t" style="left:573.54px;top:153px;font-size:12px;line-height:16px;letter-spacing:0.114px;color:#242424;">Document</span>
<span class="t" style="left:591.70px;top:172px;font-size:12px;line-height:16px;letter-spacing:-0.110px;color:#242424;">Add Element</span>
<svg style="left:636px;top:104px;" width="16" height="16" viewBox="0 0 16 16"><defs><radialGradient id="gGlobe" cx="35%" cy="30%" r="75%"><stop offset="0" stop-color="#9fd6f7"/><stop offset="1" stop-color="#2f7fd0"/></radialGradient></defs><circle cx="6.8" cy="6.8" r="6.2" fill="url(#gGlobe)"/><path d="M3 3.4 C5 2 6.6 3.2 6 5.2 C5.4 6.8 3.6 7.2 3.4 9.4 C2 8 1.6 5.2 3 3.4Z M7.6 1.6 C9.6 1.8 10.8 3 10.4 4.6 C9 5 8 4 7.6 1.6Z M6.6 9 C8 8.6 9 9.6 8.4 11.4 C7.4 12 6.6 11 6.6 9Z" fill="#56b848"/><rect x="8.6" y="6.6" width="6.4" height="8.6" fill="#f1f1f1" stroke="#a6a6a6" stroke-width=".6"/><path d="M9.8 8.6 H13.8 M9.8 10.4 H13.8 M9.8 12.2 H13.8" stroke="#9a9a9a" stroke-width=".7"/></svg>
<span class="t" style="left:654.64px;top:105px;font-size:12px;line-height:16px;letter-spacing:-0.107px;color:#242424;">From Library</span>
<svg style="left:636px;top:127px;" width="16" height="16" viewBox="0 0 16 16"><path d="M4.55 4.95 L4.69 3.28 L6.51 3.28 L6.65 4.95 L7.44 5.28 L8.72 4.19 L10.01 5.48 L8.92 6.76 L9.25 7.55 L10.92 7.69 L10.92 9.51 L9.25 9.65 L8.92 10.44 L10.01 11.72 L8.72 13.01 L7.44 11.92 L6.65 12.25 L6.51 13.92 L4.69 13.92 L4.55 12.25 L3.76 11.92 L2.48 13.01 L1.19 11.72 L2.28 10.44 L1.95 9.65 L0.28 9.51 L0.28 7.69 L1.95 7.55 L2.28 6.76 L1.19 5.48 L2.48 4.19 L3.76 5.28Z" fill="#dfe9f1" stroke="#2f5f86" stroke-width=".9"/><circle cx="5.6" cy="8.6" r="1.6" fill="#fff" stroke="#2f5f86" stroke-width=".8"/><path d="M10.18 1.73 L10.25 0.48 L11.75 0.48 L11.82 1.73 L12.42 2.02 L13.44 1.29 L14.38 2.47 L13.44 3.30 L13.59 3.95 L14.80 4.29 L14.46 5.76 L13.22 5.55 L12.81 6.07 L13.30 7.23 L11.94 7.88 L11.33 6.78 L10.67 6.78 L10.06 7.88 L8.70 7.23 L9.19 6.07 L8.78 5.55 L7.54 5.76 L7.20 4.29 L8.41 3.95 L8.56 3.30 L7.62 2.47 L8.56 1.29 L9.58 2.02Z" fill="#dfe9f1" stroke="#2f5f86" stroke-width=".8"/><circle cx="11" cy="4.2" r="1" fill="#fff" stroke="#2f5f86" stroke-width=".6"/><rect x="8.8" y="7.6" width="6.2" height="7.6" fill="#efefef" stroke="#a6a6a6" stroke-width=".6"/><path d="M10 9.6 H13.8 M10 11.4 H13.8 M10 13.2 H13.8" stroke="#9a9a9a" stroke-width=".7"/></svg>
<span class="t" style="left:654.64px;top:128px;font-size:12px;line-height:16px;letter-spacing:-0.204px;color:#242424;">From Any Process</span>
<svg style="left:636px;top:150px;" width="16" height="16" viewBox="0 0 16 16"><g fill="none" stroke="#12127a" stroke-width="2"><rect x="-3" y="-2.2" width="7.4" height="4.6" rx="2.3" transform="translate(5 4.8) rotate(45)"/><rect x="-3" y="-2.2" width="7.4" height="4.6" rx="2.3" transform="translate(10 10) rotate(45)"/></g><path d="M6.6 6.6 L9.6 9.6" stroke="#12127a" stroke-width="2.2"/></svg>
<span class="t" style="left:654.64px;top:151px;font-size:12px;line-height:16px;letter-spacing:-0.429px;color:#242424;">From URL</span>
<svg style="left:763.0px;top:104.0px;" width="31.0" height="31.0" viewBox="-15.5 -15.5 31.0 31.0"><g opacity="1.0"><circle cx="0" cy="0" r="14.05" fill="#fff" stroke="#626262" stroke-width="1.3"/><circle cx="0" cy="0" r="11.38" fill="none" stroke="#6c6c6c" stroke-width="1.0"/><circle cx="0" cy="0" r="11.02" fill="url(#gRed)"/><path d="M-10.58 -1.32 A11.02 11.02 0 0 1 10.58 -1.32 C4.41 -0.22 -4.41 2.20 -10.58 -1.32Z" fill="#fff" opacity=".3"/><rect x="-7.4" y="-3.2" width="14.8" height="6" rx="1" fill="#fff"/><rect x="-6.2" y="-2.1" width="12.4" height="3.8" fill="#c9c9c9"/><rect x="-6.2" y="-2.1" width="12.4" height="1.6" fill="#e6e6e6"/></g></svg>
<span class="t" style="left:761.74px;top:139px;font-size:12px;line-height:16px;letter-spacing:0.072px;color:#242424;">Delete</span>
<svg style="left:812px;top:105px;" width="25" height="29" viewBox="0 0 25 29"><path d="M3 1.6 L15.6 3.4 L14.6 25.4 L1.4 22.4Z" fill="#f2f8fd" stroke="#b4cfe6" stroke-width=".7"/><path d="M1.4 22.4 L14.6 25.4 L14.2 27.6 L1 24.2Z" fill="#d9d4ee" stroke="#b4b0d0" stroke-width=".4"/><path d="M2.6 15 L15 16.6" stroke="#d0dde8" stroke-width=".6"/><path d="M4.4 7.2 L7 10 L12.2 5.4" fill="none" stroke="#4fc03a" stroke-width="1.7"/><path d="M21.6 2.4 L23.8 3.6 L14.2 21 L12 19.8Z" fill="#2fb32f" stroke="#1c8a1c" stroke-width=".4"/><path d="M12 19.8 L14.2 21 L11.8 23.6Z" fill="#c9995c"/><path d="M12.2 22.4 L11.8 23.6 L12.9 22.9Z" fill="#333"/></svg>
<span class="t" style="left:802.84px;top:139px;font-size:12px;line-height:16px;letter-spacing:-0.063px;color:#242424;">Mark as</span>
<span class="t" style="left:803.34px;top:153px;font-size:12px;line-height:16px;letter-spacing:-0.213px;color:#242424;">Primary</span>
<span class="t" style="left:770.04px;top:172px;font-size:12px;line-height:16px;letter-spacing:-0.093px;color:#242424;">Edit Element</span>
<svg style="left:1272px;top:92px;" width="32" height="32" viewBox="0 0 32 32"><defs><linearGradient id="gMon" x1="0" y1="0" x2="1" y2="1"><stop offset="0" stop-color="#7fa9dc"/><stop offset="1" stop-color="#2f62a6"/></linearGradient></defs><g fill="none" stroke="#a9b0b6" stroke-width="1.1"><path d="M7.5 9.1 V7.5 H14.1 M17 5.4 V4.5 H20.8 M17.5 12.9 V15.5 H20.8 M7.5 21.6 V24.5 H14.1"/></g><path d="M14 24.6 L24 22.4 L29 23.6 L22 26.4Z" fill="#c9cdd1" opacity=".55"/><rect x="2.3" y="9.1" width="10.6" height="12.5" rx=".8" fill="url(#gMon)" stroke="#b5cde8" stroke-width=".9"/><path d="M4.6 13.4 H10.6 V17.4 H4.6Z" fill="none" stroke="#dbe8f6" stroke-width=".9"/><rect x="14.1" y="5.4" width="6.3" height="7.5" fill="#2fae5e" stroke="#bfe3cd" stroke-width=".5"/><path d="M16.6 10.6 L17.8 7.6" stroke="#c8ecd6" stroke-width=".9"/><rect x="20.8" y="1" width="4.6" height="5" fill="#cc363c" stroke="#ecc4c6" stroke-width=".4"/><rect x="20.8" y="14.8" width="4.6" height="4.7" fill="#cc363c" stroke="#ecc4c6" stroke-width=".4"/><rect x="14.1" y="23.1" width="6.3" height="7.5" fill="#2fae5e" stroke="#bfe3cd" stroke-width=".5"/><path d="M16.6 28.4 L17.8 25.4" stroke="#c8ecd6" stroke-width=".9"/></svg>
<span class="t" style="left:1264.04px;top:125px;font-size:12px;line-height:16px;letter-spacing:0.331px;color:#111;">Material</span>
<span class="t" style="left:1264.46px;top:141px;font-size:12px;line-height:16px;letter-spacing:-0.175px;color:#111;">Setup</span>
<svg style="left:1337.4px;top:91.8px;" width="31.0" height="31.0" viewBox="-15.5 -15.5 31.0 31.0"><g opacity="1.0"><circle cx="0" cy="0" r="14.05" fill="#fff" stroke="#626262" stroke-width="1.3"/><circle cx="0" cy="0" r="11.38" fill="none" stroke="#6c6c6c" stroke-width="1.0"/><circle cx="0" cy="0" r="11.02" fill="url(#gGreen)"/><path d="M-10.58 -1.32 A11.02 11.02 0 0 1 10.58 -1.32 C4.41 -0.22 -4.41 2.20 -10.58 -1.32Z" fill="#fff" opacity=".3"/><path d="M-9.4 0 L-3.4 -4.6 V-2 H3.4 V-4.6 L9.4 0 L3.4 4.6 V2 H-3.4 V4.6Z" fill="#fff"/></g></svg>
<span class="t" style="left:1324.84px;top:125px;font-size:12px;line-height:16px;letter-spacing:-0.045px;color:#111;">Entry / Exit</span>
<svg style="left:1405px;top:92px;" width="29" height="32" viewBox="0 0 29 32"><path d="M3 1.4 L23.4 3 L26 5 V30 L5.6 28.4 L3 27Z" fill="#a8d0ef"/><path d="M3 1.4 L23.4 3 V28.2 L3 27Z" fill="#eef6fc" stroke="#9cc6e8" stroke-width=".8"/><path d="M4.8 3.6 L21.6 4.8 V26 L4.8 25Z" fill="#fbfdff" stroke="#d4e4f0" stroke-width=".4"/><path d="M7.6 8.4 L11.6 8.7 M15.4 8.9 L19.8 9.2" stroke="#aeb6bc" stroke-width=".7"/><path d="M8.1 10.2 L11.6 10.5 M14.8 10.7 L19.8 11.0" stroke="#aeb6bc" stroke-width=".7"/><path d="M8.6 12.0 L11.6 12.3 M15.4 12.5 L19.8 12.8" stroke="#aeb6bc" stroke-width=".7"/><path d="M7.6 13.8 L11.6 14.1 M14.8 14.3 L19.8 14.6" stroke="#aeb6bc" stroke-width=".7"/><path d="M8.1 15.6 L11.6 15.9 M15.4 16.1 L19.8 16.4" stroke="#aeb6bc" stroke-width=".7"/><path d="M8.6 17.4 L11.6 17.7 M14.8 17.9 L19.8 18.2" stroke="#aeb6bc" stroke-width=".7"/><path d="M7.6 19.2 L11.6 19.5 M15.4 19.7 L19.8 20.0" stroke="#aeb6bc" stroke-width=".7"/><path d="M8.1 21.0 L11.6 21.3 M14.8 21.5 L19.8 21.8" stroke="#aeb6bc" stroke-width=".7"/><path d="M12 5.6 L20 6.2" stroke="#c3cbd1" stroke-width=".6"/><path d="M13 24 L20 24.5" stroke="#c3cbd1" stroke-width=".6"/></svg>
<span class="t" style="left:1398.24px;top:125px;font-size:12px;line-height:16px;letter-spacing:-0.417px;color:#111;">Recipes</span>
<div style="left:366px;top:251px;width:1054px;height:722px;background:#c1cdd6;"></div>
<div style="left:346px;top:303px;width:20px;height:670px;background:#c1cdd6;"></div>
<span class="t" style="left:388.13px;top:270px;font-size:17.2px;line-height:22px;letter-spacing:-0.429px;color:#484848;">Settings</span>
<div style="left:1375px;top:273px;width:18px;height:18px;border:1px solid #8e8e8e;background:#e3e3e3;"></div>
<svg style="left:1377px;top:275px;" width="14" height="14" viewBox="0 0 14 14"><circle cx="7" cy="7" r="6.2" fill="#f3f3f3" stroke="#6f6f6f" stroke-width=".9"/><circle cx="7" cy="7" r="4.9" fill="none" stroke="#9a9a9a" stroke-width=".7"/><circle cx="7" cy="7" r="4.2" fill="#e8213c"/><path d="M4.9 4.9 L9.1 9.1 M9.1 4.9 L4.9 9.1" stroke="#fff" stroke-width="1.7"/></svg>
<div style="left:378px;top:320px;width:1030px;height:609px;border:1px solid #a0a0a0;background:#fff;"></div>
<div style="left:431px;top:298px;width:89px;height:23px;border:1px solid #acacac;background:linear-gradient(180deg,#f0f0f0,#e5e5e5);"></div>
<div style="left:519px;top:298px;width:105px;height:23px;border:1px solid #acacac;background:linear-gradient(180deg,#f0f0f0,#e5e5e5);"></div>
<div style="left:623px;top:298px;width:110px;height:23px;border:1px solid #acacac;background:linear-gradient(180deg,#f0f0f0,#e5e5e5);"></div>
<div style="left:732px;top:298px;width:92px;height:23px;border:1px solid #acacac;background:linear-gradient(180deg,#f0f0f0,#e5e5e5);"></div>
<div style="left:381px;top:296px;width:51px;height:25px;border:1px solid #acacac;border-bottom:none;background:#fff;"></div>
<span class="t" style="left:389.74px;top:302px;font-size:12px;line-height:16px;letter-spacing:-0.692px;color:#3a3a3a;">Basics</span>
<span class="t" style="left:439.40px;top:302px;font-size:12px;line-height:16px;letter-spacing:0.082px;color:#3a3a3a;">Color Coding</span>
<span class="t" style="left:528.10px;top:302px;font-size:12px;line-height:16px;letter-spacing:0.148px;color:#3a3a3a;">Activity Splitting</span>
<span class="t" style="left:631.64px;top:302px;font-size:12px;line-height:16px;letter-spacing:-0.112px;color:#3a3a3a;">Part Assignments</span>
<span class="t" style="left:740.66px;top:302px;font-size:12px;line-height:16px;letter-spacing:0.007px;color:#3a3a3a;">Option Codes</span>
<span class="t" style="left:392.64px;top:336px;font-size:12px;line-height:16px;letter-spacing:-0.013px;color:#3a3a3a;">Name</span>
<div style="left:545px;top:335px;width:780px;height:22px;border:1px solid #ababab;background:#fff;"></div>
<span class="t" style="left:549.64px;top:339px;font-size:12px;line-height:16px;letter-spacing:-0.048px;color:#3a3a3a;">First Article Inspection Step</span>
<div style="left:1329px;top:335px;width:30px;height:22px;border:1px solid #ababab;background:#fff;"></div>
<div style="left:1331px;top:337px;width:26px;height:18px;border:1px solid #a6a6a6;background:linear-gradient(180deg,#efefef,#dcdcdc);"></div>
<svg style="left:1336px;top:338px;" width="16" height="16" viewBox="0 0 16 16"><rect x="5.2" y="1" width="9.4" height="9" fill="#fff" stroke="#111" stroke-width="1.2"/><rect x="5.2" y="1" width="9.4" height="2" fill="#111"/><rect x="1" y="4.4" width="10.6" height="10" fill="#fff" stroke="#111" stroke-width="1.25"/><rect x="1" y="4.4" width="10.6" height="2.3" fill="#111"/><path d="M2.8 9.2 H6 M2.8 11.2 H6 M2.8 13 H6" stroke="#111" stroke-width="1"/><rect x="7" y="8.4" width="3" height="5" fill="#111"/></svg>
<div style="left:1363px;top:335px;width:30px;height:22px;border:1px solid #ababab;background:#fff;"></div>
<div style="left:1365px;top:337px;width:26px;height:18px;border:1px solid #a6a6a6;background:linear-gradient(180deg,#efefef,#dcdcdc);"></div>
<svg style="left:1370px;top:338px;" width="16" height="16" viewBox="0 0 16 16"><rect x="5.2" y="1" width="9.4" height="9" fill="#fff" stroke="#111" stroke-width="1.2"/><rect x="5.2" y="1" width="9.4" height="2" fill="#111"/><rect x="1" y="4.4" width="10.6" height="10" fill="#fff" stroke="#111" stroke-width="1.25"/><rect x="1" y="4.4" width="10.6" height="2.3" fill="#111"/><path d="M2.8 9.2 H6 M2.8 11.2 H6 M2.8 13 H6" stroke="#111" stroke-width="1"/><rect x="7" y="8.4" width="3" height="5" fill="#111"/><rect x="9.4" y="9.6" width="6" height="6" fill="#111" stroke="#e6e6e6" stroke-width=".6"/><rect x="10.8" y="9.8" width="3" height="2" fill="#e6e6e6"/><rect x="10.6" y="13" width="3.6" height="2.6" fill="#e6e6e6"/></svg>
<span class="t" style="left:392.64px;top:362px;font-size:12px;line-height:16px;letter-spacing:0.114px;color:#3a3a3a;">Default Instruction</span>
<div style="left:545px;top:361px;width:848px;height:40px;border:1px solid #ababab;background:#fff;"></div>
<span class="t" style="left:550.00px;top:365px;font-size:12px;line-height:16px;letter-spacing:0.013px;color:#3a3a3a;">Guided Inspection</span>
<span class="t" style="left:393.06px;top:409px;font-size:12px;line-height:16px;letter-spacing:-0.005px;color:#3a3a3a;">Operator Interface Template</span>
<div style="left:545px;top:405px;width:848px;height:22px;border:1px solid #ababab;background:#fff;"></div>
<span class="t" style="left:550.06px;top:409px;font-size:12px;line-height:16px;letter-spacing:-0.127px;color:#3a3a3a;">Sales Apps Demo Default</span>
<div style="left:1376px;top:407px;width:15px;height:18px;border:1px solid #a6a6a6;background:linear-gradient(180deg,#f2f2f2,#e2e2e2);"></div>
<svg style="left:1379.0px;top:413.0px;" width="9" height="6" viewBox="0 0 9 6"><path d="M1.2 0.9 L4.5 4.2 L7.8 0.9" fill="none" stroke="#555" stroke-width="1.5"/></svg>
<span class="t" style="left:393.60px;top:435px;font-size:12px;line-height:16px;letter-spacing:-0.036px;color:#3a3a3a;">Assigned Workstation</span>
<div style="left:545px;top:431px;width:848px;height:22px;border:1px solid #ababab;background:#fff;"></div>
<span class="t" style="left:550.06px;top:435px;font-size:12px;line-height:16px;letter-spacing:-0.036px;color:#3a3a3a;">Select Workstation</span>
<div style="left:1365px;top:433px;width:26px;height:18px;border:1px solid #a6a6a6;background:linear-gradient(180deg,#f2f2f2,#e2e2e2);"></div>
<svg style="left:1375.0px;top:440.0px;" width="6" height="3" viewBox="0 0 6 3"><path d="M0 0H6L3.0 3Z" fill="#000"/></svg>
<div style="left:545px;top:462px;width:13px;height:13px;border:1px solid #707070;background:#fff;"></div>
<span class="t" style="left:562.30px;top:461px;font-size:12px;line-height:16px;letter-spacing:-0.025px;color:#3a3a3a;">Any Order Mode (Activities can be viewed in any order)</span>
<div style="left:545px;top:488px;width:13px;height:13px;border:1px solid #707070;background:#fff;"></div>
<svg style="left:545px;top:488px;" width="13" height="13" viewBox="0 0 13 13"><path d="M2.6 6.6 L5.2 9.6 L10.4 2.8" fill="none" stroke="#222" stroke-width="1.4"/></svg>
<span class="t" style="left:561.22px;top:487px;font-size:12px;line-height:16px;letter-spacing:-0.285px;color:#3a3a3a;">Is Step Required?</span>
<div style="left:545px;top:529px;width:13px;height:13px;border:1px solid #707070;background:#fff;"></div>
<span class="t" style="left:562.30px;top:528px;font-size:12px;line-height:16px;letter-spacing:0.039px;color:#3a3a3a;">Activities may be executed without starting a unit</span>
<span class="t" style="left:392.64px;top:554px;font-size:12px;line-height:16px;letter-spacing:-0.180px;color:#3a3a3a;">Frequency:</span>
<div style="left:545px;top:550px;width:848px;height:22px;border:1px solid #ababab;background:#fff;"></div>
<span class="t" style="left:549.54px;top:554px;font-size:12px;line-height:16px;letter-spacing:-0.336px;color:#3a3a3a;">Batch Based</span>
<div style="left:1376px;top:552px;width:15px;height:18px;border:1px solid #a6a6a6;background:linear-gradient(180deg,#f2f2f2,#e2e2e2);"></div>
<svg style="left:1379.0px;top:558.0px;" width="9" height="6" viewBox="0 0 9 6"><path d="M1.2 0.9 L4.5 4.2 L7.8 0.9" fill="none" stroke="#555" stroke-width="1.5"/></svg>
<span class="t" style="left:544.50px;top:587px;font-size:12px;line-height:16px;letter-spacing:0.020px;color:#3a3a3a;">Condition will be processed at</span>
<div style="left:709px;top:586px;width:95px;height:64px;border:1px solid #c9c9c9;background:#fff;"></div>
<div style="left:713px;top:592px;width:13px;height:13px;border:1px solid #707070;background:#fff;"></div>
<div style="left:716px;top:595px;width:7px;height:7px;background:#222;"></div>
<span class="t" style="left:729.98px;top:591px;font-size:12px;line-height:16px;letter-spacing:-0.093px;color:#3a3a3a;">(Select All)</span>
<div style="left:713px;top:612px;width:13px;height:13px;border:1px solid #707070;background:#fff;"></div>
<svg style="left:713px;top:612px;" width="13" height="13" viewBox="0 0 13 13"><path d="M2.6 6.6 L5.2 9.6 L10.4 2.8" fill="none" stroke="#222" stroke-width="1.4"/></svg>
<span class="t" style="left:730.16px;top:611px;font-size:12px;line-height:16px;letter-spacing:-0.097px;color:#3a3a3a;">Start of Batch</span>
<div style="left:713px;top:632px;width:13px;height:13px;border:1px solid #707070;background:#fff;"></div>
<span class="t" style="left:729.74px;top:631px;font-size:12px;line-height:16px;letter-spacing:-0.065px;color:#3a3a3a;">End of Batch</span>
<span class="t" style="left:395.10px;top:676px;font-size:12px;line-height:16px;letter-spacing:-0.055px;color:#3a3a3a;">Activity Tracking</span>
<svg style="left:544px;top:678px;" width="16" height="16" viewBox="0 0 16 16"><circle cx="8.90" cy="8.90" r="6.4" fill="#fff" stroke="#6e6e6e" stroke-width="1"/><circle cx="8.90" cy="8.90" r="3.9" fill="#222"/></svg>
<span class="t" style="left:563.54px;top:679px;font-size:12px;line-height:16px;letter-spacing:-0.179px;color:#3a3a3a;">By Current User</span>
<svg style="left:544px;top:704px;" width="16" height="16" viewBox="0 0 16 16"><circle cx="8.90" cy="8.90" r="6.4" fill="#fff" stroke="#6e6e6e" stroke-width="1"/></svg>
<span class="t" style="left:563.54px;top:705px;font-size:12px;line-height:16px;letter-spacing:-0.165px;color:#3a3a3a;">By User Group</span>
<svg style="left:544px;top:730px;" width="16" height="16" viewBox="0 0 16 16"><circle cx="8.90" cy="8.90" r="6.4" fill="#fff" stroke="#6e6e6e" stroke-width="1"/></svg>
<span class="t" style="left:563.54px;top:731px;font-size:12px;line-height:16px;letter-spacing:-0.322px;color:#3a3a3a;">By User Role</span>
<svg style="left:544px;top:756px;" width="16" height="16" viewBox="0 0 16 16"><circle cx="8.90" cy="8.90" r="6.4" fill="#fff" stroke="#6e6e6e" stroke-width="1"/></svg>
<span class="t" style="left:563.54px;top:757px;font-size:12px;line-height:16px;letter-spacing:0.840px;color:#3a3a3a;">No</span>
<span class="t" style="left:576.30px;top:787px;font-size:13.8px;line-height:17px;letter-spacing:-0.201px;color:#3a3a3a;">Activity Completion Acknowledgement</span>
<div style="left:576px;top:813px;width:788px;height:1px;background:#b4b4b4;"></div>
<span class="t" style="left:576.10px;top:821px;font-size:12px;line-height:16px;letter-spacing:0.132px;color:#3a3a3a;">Add Acknowledgement to:</span>
<div style="left:720px;top:818px;width:644px;height:22px;border:1px solid #ababab;background:#fff;"></div>
<span class="t" style="left:725.40px;top:821px;font-size:12px;line-height:16px;letter-spacing:0.051px;color:#3a3a3a;">All Activities</span>
<div style="left:1347px;top:820px;width:15px;height:18px;border:1px solid #a6a6a6;background:linear-gradient(180deg,#f2f2f2,#e2e2e2);"></div>
<svg style="left:1350.0px;top:826.0px;" width="9" height="6" viewBox="0 0 9 6"><path d="M1.2 0.9 L4.5 4.2 L7.8 0.9" fill="none" stroke="#555" stroke-width="1.5"/></svg>
<span class="t" style="left:575.20px;top:856px;font-size:13.8px;line-height:17px;letter-spacing:-0.250px;color:#3a3a3a;">Do you want to require credentials?</span>
<div style="left:576px;top:882px;width:788px;height:1px;background:#b4b4b4;"></div>
<svg style="left:575px;top:889px;" width="16" height="16" viewBox="0 0 16 16"><circle cx="8.10" cy="8.95" r="6.4" fill="#fff" stroke="#6e6e6e" stroke-width="1"/><circle cx="8.10" cy="8.95" r="3.9" fill="#222"/></svg>
<span class="t" style="left:594.07px;top:891px;font-size:11.4px;line-height:14px;letter-spacing:-0.727px;color:#3a3a3a;">Yes</span>
<div style="left:1377px;top:654px;width:16px;height:259px;background:#f0f0f0;"></div>
<div style="left:1377px;top:671px;width:16px;height:137px;background:#c1c1c1;"></div>
<svg style="left:1381px;top:659px;" width="9" height="6" viewBox="0 0 9 6"><path d="M1.2 5 L4.5 1.7 L7.8 5" fill="none" stroke="#555" stroke-width="1.5"/></svg>
<svg style="left:1381px;top:903px;" width="9" height="6" viewBox="0 0 9 6"><path d="M1.2 0.9 L4.5 4.2 L7.8 0.9" fill="none" stroke="#555" stroke-width="1.5"/></svg>
<div style="left:1330px;top:941px;width:75px;height:22px;border:1px solid #a6a6a6;background:linear-gradient(180deg,#f3f3f3,#e1e1e1);"></div>
<span class="t" style="left:1358.59px;top:945px;font-size:12px;line-height:16px;letter-spacing:0.000px;color:#222;">OK</span>
<div style="left:342px;top:534px;width:2px;height:1px;background:#8c8c8c;"></div>
<div style="left:342px;top:536px;width:2px;height:1px;background:#8c8c8c;"></div>
<div style="left:342px;top:538px;width:2px;height:1px;background:#8c8c8c;"></div>
<div style="left:342px;top:540px;width:2px;height:1px;background:#8c8c8c;"></div>
<div style="left:342px;top:542px;width:2px;height:1px;background:#8c8c8c;"></div>
<div style="left:342px;top:544px;width:2px;height:1px;background:#8c8c8c;"></div>
<div style="left:342px;top:546px;width:2px;height:1px;background:#8c8c8c;"></div>
<div style="left:342px;top:548px;width:2px;height:1px;background:#8c8c8c;"></div>
</div></body></html>
